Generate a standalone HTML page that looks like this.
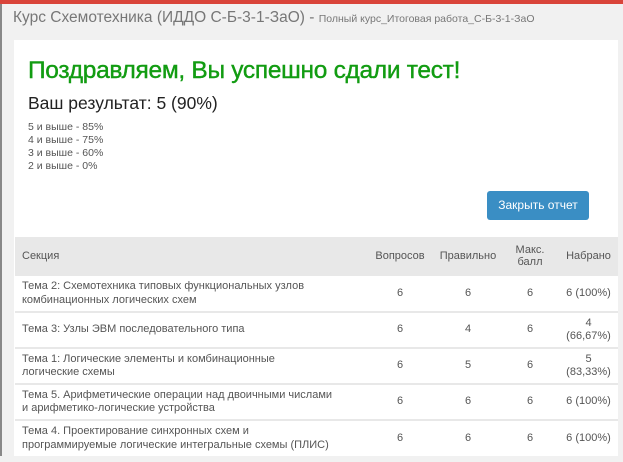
<!DOCTYPE html>
<html><head><meta charset="utf-8"><style>
*{margin:0;padding:0;box-sizing:border-box}
body{width:623px;height:462px;background:#f1f1f1;font-family:"Liberation Sans",sans-serif;position:relative;overflow:hidden;color:#555}
.top{position:absolute;left:0;top:0;width:623px;height:4px;background:#d9443a}
.lb{position:absolute;left:0;top:4px;width:2px;height:452px;background:#888}
.title{position:absolute;left:13px;top:9px;font-size:15.5px;color:#777;white-space:nowrap}
.title small{font-size:10.5px;color:#777}
.card{position:absolute;left:14px;top:40px;width:604px;height:416px;background:#fff}
h1{position:absolute;left:28px;top:57px;font-size:24.5px;color:#129c12;font-weight:normal;white-space:nowrap;letter-spacing:-0.3px;-webkit-text-stroke:0.4px #129c12}
.res{position:absolute;left:28px;top:93px;font-size:17.5px;color:#222;white-space:nowrap}
.sc{position:absolute;left:28px;top:121px;font-size:10.5px;line-height:13px;color:#555}
.btn{position:absolute;left:487px;top:191px;width:102px;height:29px;background:#3a8ec4;border-radius:3px;color:#fff;font-size:12px;text-align:center;line-height:29px}
table{position:absolute;left:15px;top:237px;width:603px;border-collapse:collapse;font-size:11px;color:#555}
th{background:#e8e8e8;font-weight:normal;height:38px;color:#555;font-size:11px}
td{border-top:2px solid #e8e8e8;height:36px;text-align:center;line-height:13.5px}
td:first-child,th:first-child{text-align:left;padding-left:7px}
</style></head><body>
<div class="top"></div><div class="lb"></div>
<div class="title">Курс Схемотехника (ИДДО С-Б-3-1-ЗаО) - <small>Полный курс_Итоговая работа_С-Б-3-1-ЗаО</small></div>
<div class="card"></div>
<h1>Поздравляем, Вы успешно сдали тест!</h1>
<div class="res">Ваш результат: 5 (90%)</div>
<div class="sc">5 и выше - 85%<br>4 и выше - 75%<br>3 и выше - 60%<br>2 и выше - 0%</div>
<div class="btn">Закрыть отчет</div>
<table>
<tr><th style="width:350px">Секция</th><th style="width:70px">Вопросов</th><th style="width:66px">Правильно</th><th style="width:58px">Макс.<br>балл</th><th>Набрано</th></tr>
<tr><td style="height:37px">Тема 2: Схемотехника типовых функциональных узлов<br>комбинационных логических схем</td><td>6</td><td>6</td><td>6</td><td>6 (100%)</td></tr>
<tr><td>Тема 3: Узлы ЭВМ последовательного типа</td><td>6</td><td>4</td><td>6</td><td>4<br>(66,67%)</td></tr>
<tr><td>Тема 1: Логические элементы и комбинационные<br>логические схемы</td><td>6</td><td>5</td><td>6</td><td>5<br>(83,33%)</td></tr>
<tr><td style="height:35px">Тема 5. Арифметические операции над двоичными числами<br>и арифметико-логические устройства</td><td>6</td><td>6</td><td>6</td><td>6 (100%)</td></tr>
<tr><td>Тема 4. Проектирование синхронных схем и<br>программируемые логические интегральные схемы (ПЛИС)</td><td>6</td><td>6</td><td>6</td><td>6 (100%)</td></tr>
</table>
</body></html>
